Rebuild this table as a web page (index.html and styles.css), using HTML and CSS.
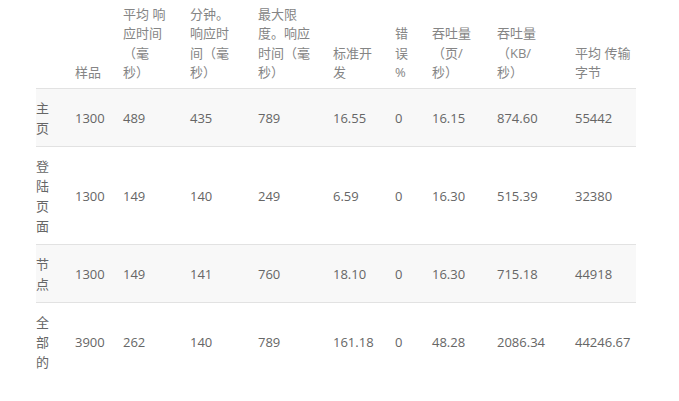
FILE: index.html
```html
<!DOCTYPE html>
<html lang="zh-CN">
<head>
<meta charset="utf-8">
<title>统计</title>
<link rel="stylesheet" href="styles.css">
</head>
<body>
<table class="stats">
  <colgroup>
    <col class="c1"><col class="c2"><col class="c3"><col class="c4"><col class="c5">
    <col class="c6"><col class="c7"><col class="c8"><col class="c9"><col class="c10">
  </colgroup>
  <thead>
    <tr>
      <th></th>
      <th>样品</th>
      <th>平均 响应时间（毫秒）</th>
      <th>分钟。响应时间（毫秒）</th>
      <th>最大限度。响应时间（毫秒）</th>
      <th>标准开发</th>
      <th class="narrow">错误%</th>
      <th>吞吐量（页/秒）</th>
      <th>吞吐量（KB/秒）</th>
      <th>平均 传输字节</th>
    </tr>
  </thead>
  <tbody>
    <tr>
      <td>主页</td><td>1300</td><td>489</td><td>435</td><td>789</td><td>16.55</td><td>0</td><td>16.15</td><td>874.60</td><td>55442</td>
    </tr>
    <tr>
      <td>登陆页面</td><td>1300</td><td>149</td><td>140</td><td>249</td><td>6.59</td><td>0</td><td>16.30</td><td>515.39</td><td>32380</td>
    </tr>
    <tr>
      <td>节点</td><td>1300</td><td>149</td><td>141</td><td>760</td><td>18.10</td><td>0</td><td>16.30</td><td>715.18</td><td>44918</td>
    </tr>
    <tr>
      <td>全部的</td><td>3900</td><td>262</td><td>140</td><td>789</td><td>161.18</td><td>0</td><td>48.28</td><td>2086.34</td><td>44246.67</td>
    </tr>
  </tbody>
</table>
</body>
</html>
```

FILE: styles.css
```css
html, body {
  margin: 0;
  padding: 0;
  background: #ffffff;
}

body {
  font-family: "Open Sans", "Noto Sans CJK SC", sans-serif;
  font-size: 13px;
  line-height: 20px;
  color: #666666;
  text-spacing-trim: space-all;
}

.stats {
  margin-left: 36px;
  width: 600px;
  table-layout: fixed;
  border-collapse: collapse;
  border-spacing: 0;
}

.stats .c1 { width: 39px; }
.stats .c2 { width: 48px; }
.stats .c3 { width: 67px; }
.stats .c4 { width: 68px; }
.stats .c5 { width: 75px; }
.stats .c6 { width: 62px; }
.stats .c7 { width: 37px; }
.stats .c8 { width: 65px; }
.stats .c9 { width: 78px; }
.stats .c10 { width: 61px; }

.stats th,
.stats td {
  text-align: left;
  padding: 9px 18px 8px 0;
  word-break: normal;
}

.stats th {
  font-weight: normal;
  color: #858585;
  vertical-align: bottom;
  line-height: 19.3px;
  padding-top: 5px;
  padding-bottom: 6px;
  border-bottom: 1px solid #e2e2e2;
}

.stats th.narrow {
  line-break: anywhere;
}

.stats td {
  vertical-align: middle;
  border-top: 1px solid #e2e2e2;
}

.stats th:nth-child(9),
.stats td:nth-child(9) {
  padding-right: 26px;
}

.stats th:nth-child(10),
.stats td:nth-child(10) {
  padding-right: 0;
}

.stats tbody tr:first-child td {
  border-top: none;
}

.stats tbody tr:nth-child(odd) td {
  background: #f8f8f8;
}
```
